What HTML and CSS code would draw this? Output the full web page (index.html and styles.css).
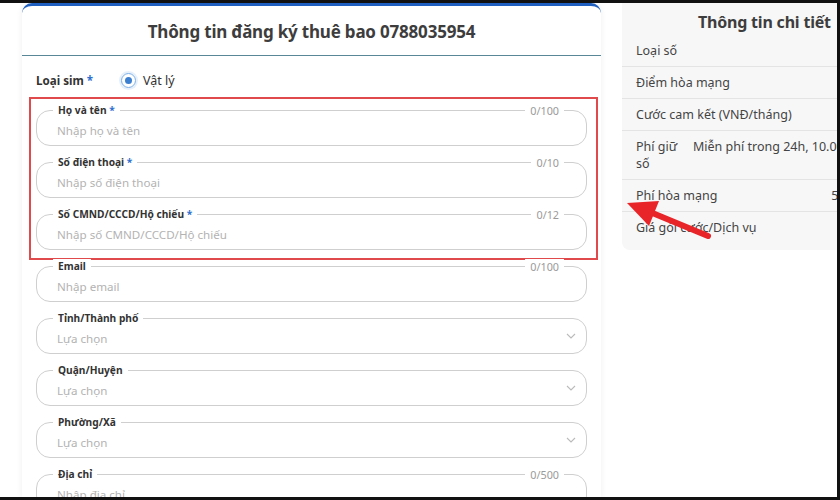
FILE: index.html
```html
<!DOCTYPE html>
<html lang="vi">

<head>
  <meta charset="UTF-8">
  <meta name="viewport" content="width=device-width, initial-scale=1.0">
  <title>Thông tin đăng ký thuê bao</title>
  <link rel="stylesheet" href="styles.css">
</head>

<body>
  <div class="screen">
    <section class="reg">
      <h2 class="reg-title">Thông tin đăng ký thuê bao 0788035954</h2>
      <div class="reg-body">
        <div class="sim-row">
          <span class="sim-label">Loại sim <i class="req">*</i></span>
          <span class="radio"><span class="radio-dot"></span></span>
          <span class="sim-value">Vật lý</span>
        </div>

        <!-- khung đỏ đánh dấu -->
        <div class="highlight">
          <div class="field">
            <span class="field-label">Họ và tên <i class="req">*</i></span>
            <span class="field-count">0/100</span>
            <span class="field-input">Nhập họ và tên</span>
          </div>
          <div class="field">
            <span class="field-label">Số điện thoại <i class="req">*</i></span>
            <span class="field-count">0/10</span>
            <span class="field-input">Nhập số điện thoại</span>
          </div>
          <div class="field">
            <span class="field-label">Số CMND/CCCD/Hộ chiếu <i class="req">*</i></span>
            <span class="field-count">0/12</span>
            <span class="field-input">Nhập số CMND/CCCD/Hộ chiếu</span>
          </div>
        </div>

        <div class="field field-email">
          <span class="field-label">Email</span>
          <span class="field-count">0/100</span>
          <span class="field-input">Nhập email</span>
        </div>
        <div class="field">
          <span class="field-label">Tỉnh/Thành phố</span>
          <span class="field-input">Lựa chọn</span>
          <svg class="chevron" viewBox="0 0 10 6" width="10" height="6">
            <path d="M1 1l4 4 4-4" fill="none" stroke="#bbb" stroke-width="1.1" />
          </svg>
        </div>
        <div class="field">
          <span class="field-label">Quận/Huyện</span>
          <span class="field-input">Lựa chọn</span>
          <svg class="chevron" viewBox="0 0 10 6" width="10" height="6">
            <path d="M1 1l4 4 4-4" fill="none" stroke="#bbb" stroke-width="1.1" />
          </svg>
        </div>
        <div class="field">
          <span class="field-label">Phường/Xã</span>
          <span class="field-input">Lựa chọn</span>
          <svg class="chevron" viewBox="0 0 10 6" width="10" height="6">
            <path d="M1 1l4 4 4-4" fill="none" stroke="#bbb" stroke-width="1.1" />
          </svg>
        </div>
        <div class="field">
          <span class="field-label">Địa chỉ</span>
          <span class="field-count">0/500</span>
          <span class="field-input">Nhập địa chỉ</span>
        </div>
      </div>
    </section>

    <aside class="detail">
      <h3 class="detail-title">Thông tin chi tiết</h3>
      <div class="row"><span class="row-label">Loại số</span><span class="row-value"></span></div>
      <div class="row"><span class="row-label">Điểm hòa mạng</span><span class="row-value"></span></div>
      <div class="row"><span class="row-label">Cước cam kết (VNĐ/tháng)</span><span class="row-value"></span></div>
      <div class="row row-fee"><span class="row-label">Phí giữ số</span><span class="row-value">Miễn phí trong 24h, 10.000đ/ngày</span></div>
      <div class="row"><span class="row-label">Phí hòa mạng</span><span class="row-value">50.000đ</span></div>
      <div class="row"><span class="row-label">Giá gói cước/Dịch vụ</span><span class="row-value"></span></div>
    </aside>

    <!-- mũi tên chú thích -->
    <svg class="arrow" viewBox="0 0 840 500" width="840" height="500">
      <line x1="708" y1="236" x2="650" y2="212" stroke="#e8262a" stroke-width="6" stroke-linecap="round" />
      <polygon points="627,203 659,201 649,226" fill="#e8262a" />
    </svg>
  </div>
</body>

</html>
```

FILE: styles.css
```css
* {
  margin: 0;
  padding: 0;
  box-sizing: border-box;
}

body {
  background: #000;
  font-family: "Noto Sans", "Liberation Sans", sans-serif;
  color: #333;
}

i {
  font-style: normal;
}

.req {
  color: #2f6fcf;
}

.screen {
  position: relative;
  width: 840px;
  height: 500px;
  display: flex;
  gap: 21px;
  padding-left: 22px;
  background: #fff;
  border-top: 3px solid #111;
  border-right: 3px solid #111;
  border-bottom: 3px solid #111;
  overflow: hidden;
}

/* form dang ky */
.reg {
  flex: 0 0 579px;
  background: #fff;
  border-top: 3px solid #1f5fbf;
  border-radius: 10px 10px 0 0;
  box-shadow: 0 0 6px rgba(0, 0, 0, 0.07);
}

.reg-title {
  height: 50px;
  line-height: 51px;
  text-align: center;
  font-size: 17px;
  letter-spacing: -0.2px;
  font-weight: 700;
  color: #3d3d3d;
  border-bottom: 1px solid #5a8798;
}

.reg-body {
  padding: 0 14px;
}

.sim-row {
  display: flex;
  align-items: center;
  height: 22px;
  margin-top: 13px;
  font-size: 12.5px;
}

.sim-label {
  width: 85px;
  font-size: 11.6px;
  font-weight: 700;
}

.radio {
  width: 15px;
  height: 15px;
  border: 1px solid #7aaee6;
  border-radius: 50%;
  display: flex;
  align-items: center;
  justify-content: center;
  margin-right: 7px;
  box-shadow: 0 0 0 2px #e6f0fb;
}

.radio-dot {
  width: 7px;
  height: 7px;
  border-radius: 50%;
  background: #3b7fd0;
}

.sim-value {
  color: #333;
}

.highlight {
  margin: 6px -11px 0 -7px;
  padding: 11px 9px 8px 5px;
  border: 2px solid #e04a4c;
}

.field {
  position: relative;
  height: 36px;
  border: 1px solid #cfcfcf;
  border-radius: 14px;
  display: flex;
  align-items: center;
  padding-left: 20px;
  margin-top: 16px;
}

.highlight .field:first-child {
  margin-top: 0;
}

.field-email {
  margin-top: 6px;
}

.field-label {
  position: absolute;
  top: -8px;
  left: 16px;
  padding: 0 5px;
  background: #fff;
  font-size: 10.2px;
  font-weight: 700;
  line-height: 15px;
  color: #333;
}

.field-count {
  position: absolute;
  top: -8px;
  right: 22px;
  padding: 0 5px;
  background: #fff;
  font-size: 10.8px;
  line-height: 15px;
  color: #9a9a9a;
}

.field-input {
  font-size: 11.6px;
  color: #b3b3b3;
  padding-top: 4px;
}

.chevron {
  margin-left: auto;
  margin-right: 10px;
}

/* bang chi tiet */
.detail {
  flex: 0 0 270px;
  width: 270px;
  min-width: 0;
  align-self: flex-start;
  background: #f7f7f8;
  border-radius: 0 0 8px 8px;
  padding-bottom: 7px;
}

.detail-title {
  padding: 6px 0 0 76px;
  line-height: 26px;
  font-size: 16px;
  letter-spacing: -0.2px;
  font-weight: 700;
  color: #3d3d3d;
  white-space: nowrap;
}

.row {
  display: flex;
  justify-content: space-between;
  gap: 10px;
  padding: 7px 14px;
  line-height: 17px;
  font-size: 12.5px;
  color: #444;
  border-bottom: 1px solid #e4e4e4;
}

.row:last-child {
  border-bottom: none;
}

.row-label {
  flex: 0 0 auto;
}

.row-value {
  white-space: nowrap;
  text-align: right;
}

.row-fee {
  justify-content: flex-start;
  gap: 0;
}

.row-fee .row-label {
  width: 57px;
}

.row-fee .row-value {
  text-align: left;
}

.arrow {
  position: absolute;
  top: -3px;
  left: 0;
  pointer-events: none;
}
```
